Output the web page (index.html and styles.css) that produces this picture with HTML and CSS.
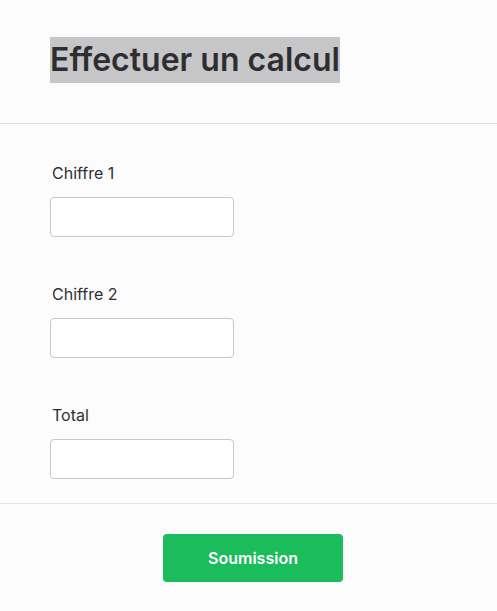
FILE: index.html
```html
<!DOCTYPE html>
<html lang="fr">
<head>
<meta charset="utf-8">
<title>Effectuer un calcul</title>
<link rel="stylesheet" href="styles.css">
</head>
<body>
<header class="head">
  <h1 class="title">Effectuer un calcul</h1>
</header>
<form class="form">
  <div class="field">
    <label class="label" for="a">Chiffre 1</label>
    <input class="input" id="a" type="text">
  </div>
  <div class="field">
    <label class="label" for="b">Chiffre 2</label>
    <input class="input" id="b" type="text">
  </div>
  <div class="field">
    <label class="label" for="t">Total</label>
    <input class="input" id="t" type="text">
  </div>
</form>
<footer class="foot">
  <button class="submit" type="button">Soumission</button>
</footer>
</body>
</html>
```
FILE: styles.css
```css
html, body {
  margin: 0;
  padding: 0;
  background: #fcfcfc;
  font-family: Inter, "Noto Sans", sans-serif;
  color: #333333;
}
.head {
  padding: 37px 0 0 50px;
  height: 86px;
  border-bottom: 1px solid #dcdce2;
}
.title {
  display: inline-block;
  margin: 0;
  background: #c6c6c8;
  font-size: 32px;
  line-height: 46px;
  font-weight: 600;
  color: #2e2e30;
}
.form {
  display: flex;
  flex-direction: column;
  gap: 48px;
  padding: 40px 0 24px 50px;
  border-bottom: 1px solid #e4e4ea;
}
.field {
  display: flex;
  flex-direction: column;
  align-items: flex-start;
  gap: 15px;
}
.label {
  font-size: 16px;
  line-height: 18px;
  padding-left: 2px;
  color: #2f3033;
}
.input {
  box-sizing: border-box;
  width: 184px;
  height: 40px;
  border: 1px solid #c8c8cc;
  border-radius: 4px;
  background: #ffffff;
  margin: 0;
}
.foot {
  padding: 30px 0 0 163px;
}
.submit {
  width: 180px;
  height: 48px;
  border: none;
  border-radius: 4px;
  background: #1abc5c;
  color: #ffffff;
  font-family: Inter, "Noto Sans", sans-serif;
  font-size: 16px;
  font-weight: 600;
}
```
